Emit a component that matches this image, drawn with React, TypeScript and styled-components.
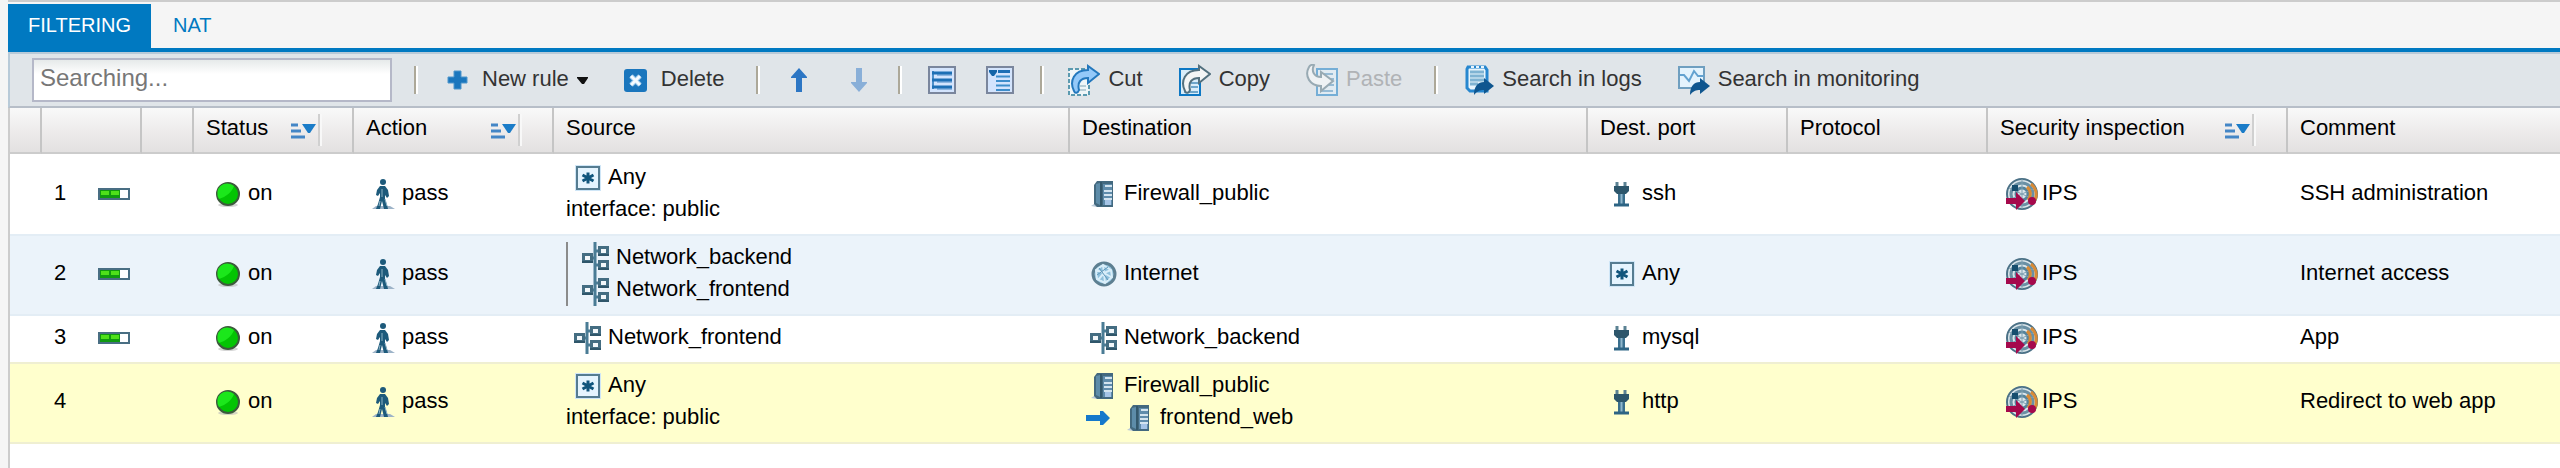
import React from 'react';
import styled, { createGlobalStyle } from 'styled-components';

const GlobalStyle = createGlobalStyle`
  * { box-sizing: border-box; }
  body {
    margin: 0;
    background: #f5f5f5;
    color: #000;
    font-family: "Liberation Sans", Arial, sans-serif;
    font-size: 22px;
  }
  button, input { font: inherit; color: inherit; }
  svg { display: block; flex: none; }
`;

const Panel = styled.main`
  margin-left: 8px;
  min-height: 100vh;
  display: flex;
  flex-direction: column;
  border-top: 2px solid #ccc;
`;

const TabBar = styled.div`
  display: flex;
  gap: 2px;
  padding-top: 2px;
  border-bottom: 4px solid #0079c1;
`;

const Tab = styled.button<{ $active?: boolean }>`
  border: 0;
  padding: 0 20px 2px;
  font-size: 20px;
  line-height: 42px;
  background: ${(p) => (p.$active ? '#0079c1' : 'transparent')};
  color: ${(p) => (p.$active ? '#fff' : '#0079c1')};
`;

const Toolbar = styled.div`
  display: flex;
  align-items: center;
  padding: 4px 22px;
  border: solid #b8cad8;
  border-width: 2px 0 2px 2px;
  border-bottom-color: #b7bec8;
  background: #e0e5e9;
  color: #333;
`;

const SearchBox = styled.input`
  width: 360px;
  height: 44px;
  padding: 0 6px 4px;
  border: 2px solid #b5b8c8;
  border-radius: 0;
  outline: 0;
  background: linear-gradient(#e6eaea, #fff 14px);
  font-size: 24px;
  &::placeholder { color: #777; opacity: 1; }
`;

const Separator = styled.span`
  width: 4px;
  height: 28px;
  margin: 0 24px;
  border-left: 2px solid #aca899;
  border-right: 2px solid #fff;
`;

const FirstSeparator = styled(Separator)`
  margin-left: 22px;
`;

const Group = styled.div<{ $gap: number }>`
  display: flex;
  gap: ${(p) => p.$gap}px;
`;

const ToolButton = styled.button<{ $menu?: boolean }>`
  display: flex;
  align-items: center;
  gap: 8px;
  border: 0;
  padding: 0 ${(p) => (p.$menu ? 4 : 8)}px 0 0;
  background: transparent;
  white-space: nowrap;
  &:disabled { color: #b0b3b6; }
  &:disabled svg { opacity: 0.5; }
`;

const IconButton = styled(ToolButton)`
  padding: 0;
`;

const Caption = styled.span`
  line-height: 30px;
  padding-bottom: 2px;
`;

const Grid = styled.div`
  flex: 1;
  border-left: 2px solid #ccc;
  background: #fff;
`;

const RuleTable = styled.table`
  width: 100%;
  table-layout: fixed;
  border-collapse: separate;
  border-spacing: 0;
`;

const Column = styled.col<{ $width?: number }>`
  ${(p) => (p.$width ? `width: ${p.$width}px;` : '')}
`;

const HeadCell = styled.th`
  height: 46px;
  padding: 0 30px 0 12px;
  border-right: 2px solid #c5c5c5;
  border-bottom: 2px solid #ccc;
  background: linear-gradient(#f9f9f9, #eeecec 50%, #e3e1e1);
  font-weight: 400;
  text-align: left;
  white-space: nowrap;
  &:last-child { border-right: 0; }
`;

const HeadInner = styled.div`
  display: flex;
  justify-content: space-between;
  align-items: center;
`;

const HeadText = styled.span`
  line-height: 28px;
  padding-bottom: 4px;
`;

const SortMark = styled.span`
  display: flex;
  align-items: center;
  gap: 2px;
  height: 32px;
  border-right: 2px solid #f8f8f8;
`;

const SortLine = styled.span`
  width: 2px;
  height: 32px;
  background: #d0d0d0;
`;

type Tone = 'plain' | 'blue' | 'yellow';
const toneFill = { plain: '#fff', blue: '#ebf3fa', yellow: '#ffffcd' };
const toneEdge = { none: '#fff', blue: '#e3edf5', yellow: '#efefd2' };

const Row = styled.tr<{ $tone: Tone; $edge: keyof typeof toneEdge }>`
  & > td {
    padding: 6px 0 8px 12px;
    border-top: 2px solid ${(p) => toneEdge[p.$edge]};
    background: ${(p) => toneFill[p.$tone]};
    vertical-align: middle;
    white-space: nowrap;
  }
  &:last-child > td { border-bottom: 2px solid ${toneEdge.yellow}; }
`;

const Line = styled.div<{ $indent?: boolean }>`
  display: flex;
  align-items: flex-start;
  gap: 4px;
  height: 32px;
  line-height: 30px;
  padding-left: ${(p) => (p.$indent ? 6 : 0)}px;
`;

const RuleNumber = styled.span`
  width: 40px;
`;

const ObjectList = styled.div`
  border-left: 2px solid #8b8b8b;
  padding-left: 6px;
`;

const Redirect = styled.div`
  display: flex;
  gap: 4px;
`;

const Icon = ({ children }: { children: React.ReactNode }) => (
  <svg width="32" height="32" viewBox="0 0 32 32" aria-hidden="true">{children}</svg>
);

const PlusIcon = () => (
  <Icon><path d="M12 7h7v6h6v6h-6v6h-7v-6H6v-6h6z" fill="#1a76bd" stroke="#4f96cc" /></Icon>
);

const CaretIcon = () => (
  <svg width="12" height="32" viewBox="0 0 12 32" aria-hidden="true">
    <path d="M0 13h11v1l-4 6H5l-5-6z" fill="#111" />
  </svg>
);

const DeleteIcon = () => (
  <Icon>
    <rect x="3" y="5" width="23" height="23" rx="3" fill="#1a76bd" />
    <path d="M10 12l9 9M19 12l-9 9" stroke="#8fc0e6" strokeWidth="5" />
    <path d="M10 12l9 9M19 12l-9 9" stroke="#f4faff" strokeWidth="3" />
  </Icon>
);

const UpIcon = () => (
  <Icon><path d="M15 4l8 9v1h-5v14h-6V14H7v-1z" fill="#2c76c4" /></Icon>
);

const DownIcon = () => (
  <Icon><path d="M17 28l8-9v-1h-5V4h-6v14H9v1z" fill="#89afd8" /></Icon>
);

const ExpandIcon = () => (
  <Icon>
    <rect x="3" y="3" width="26" height="26" fill="#d3e4fd" stroke="#7a869d" strokeWidth="2" />
    <path d="M11 11h15M11 18h15M11 25h15" stroke="#8eb6e0" strokeWidth="2" />
    <path d="M7 7v18" stroke="#4d8fc9" strokeWidth="2" />
    <path d="M6 9h20M6 16h20M6 23h20" stroke="#1d6fb5" strokeWidth="3" />
  </Icon>
);

const CollapseIcon = () => (
  <Icon>
    <rect x="3" y="3" width="26" height="26" fill="#d3e4fd" stroke="#7a869d" strokeWidth="2" />
    <path d="M5 6h8v2l-3 4H8L5 8z" fill="#1465a8" />
    <path d="M14 7.500h12" stroke="#1d6fb5" strokeWidth="3" />
    <path d="M12 12.500h14M12 17h14M12 21.500h14M12 26h14" stroke="#3d8dcb" strokeWidth="2" />
  </Icon>
);

const bend = 'M6 27C1 17 6 6 20 6V2l11 8-11 9v-5c-7 0-11 4-9 12-1 3-4 4-5 1z';

const CutIcon = () => (
  <Icon>
    <path d="M1 5h15v4h5v22H1z" fill="#f0f6f8" stroke="#5b9ab0" strokeWidth="2" strokeDasharray="4 2" />
    <path d="M12 22h6M9 26h9" stroke="#b7cdd6" strokeWidth="2" />
    <path d={bend} fill="#94c9f9" stroke="#2478bd" strokeWidth="2" />
  </Icon>
);

const CopyIcon = () => (
  <Icon>
    <path d="M1 5h20v26H1z" fill="#d8edfa" stroke="#0d78c4" strokeWidth="2" />
    <path d="M12 19h7M12 23h7M5 28h14" stroke="#6da6cb" strokeWidth="2" />
    <path d={bend} fill="#f3f5f5" stroke="#52707e" strokeWidth="2" />
  </Icon>
);

const PasteIcon = () => (
  <Icon>
    <path d="M11 5h20v26H11z" fill="#e3f1fb" stroke="#0d78c4" strokeWidth="2" />
    <path d="M15 10h12M19 15h9M23 21h5M15 27h12" stroke="#4f93c2" strokeWidth="2" />
    <path d="M8 1C5 7 8 13 15 13V8l12 9-12 10v-5C4 22-2 12 3 3c1-2 4-3 5-2z" fill="#fff" stroke="#52707e" strokeWidth="2" />
  </Icon>
);

const shareArrow = 'M12 31c0-9 4-13 10-13v-4l10 8-10 8v-4c-4 0-7 1-10 5z';

const LogsIcon = () => (
  <Icon>
    <path d="M6 3h17l2 3v21H8l-3-3V5z" fill="#e8f5fd" stroke="#2787cf" strokeWidth="3" />
    <path d="M9 3h3M14 3h3M19 3h3" stroke="#e8f5fd" strokeWidth="2" />
    <path d="M8 8h14M8 12h14M8 16h14M8 20h8" stroke="#7fb3d2" strokeWidth="3" />
    <path d={shareArrow} fill="#0f568f" />
  </Icon>
);

const MonitoringIcon = () => (
  <Icon>
    <rect x="1" y="3" width="25" height="21" fill="#e4f3fd" stroke="#6f9fc0" strokeWidth="2" />
    <path d="M2 11h4l5 6 5-10 4 5h6" fill="none" stroke="#63a2d0" strokeWidth="2" />
    <path d={shareArrow} fill="#0f568f" />
  </Icon>
);

const SortIcon = () => (
  <svg width="25" height="20" viewBox="0 0 25 20" aria-hidden="true">
    <path d="M0 5h7M0 11h10M0 17h14" stroke="#4486c6" strokeWidth="3" />
    <path d="M11 4h14l-6 9h-2z" fill="#1b7cc8" />
  </svg>
);

const UsageMeter = () => (
  <Icon>
    <rect x="1" y="11" width="30" height="10" fill="#fff" stroke="#496e83" strokeWidth="2" />
    <path d="M2 12h20v8H2z" fill="#0f9a10" />
    <path d="M3 13h8v4H3zM13 13h8v4h-8z" fill="#4fe01a" />
  </Icon>
);

const OnIcon = () => (
  <Icon>
    <ellipse cx="16" cy="27" rx="10" ry="2" fill="#bbb" opacity="0.6" />
    <circle cx="16" cy="16" r="11" fill="#03c403" stroke="#3c5a3c" strokeWidth="2" />
    <path d="M7 21A10 10 0 0 1 22 8C20 14 14 19 7 21z" fill="#1be71b" />
  </Icon>
);

const PassIcon = () => (
  <Icon>
    <path d="M6 31l4-3h14l5 3z" fill="#9db3c8" />
    <circle cx="17" cy="4" r="3" fill="#1d5a7b" />
    <path d="M14 8h5l3 4 1 6-2 2-2-3v4l2 6 1 4h-4l-2-8-2 8h-4l2-5 2-7v-4l-2 3-2-1 1-5z" fill="#1d5a7b" />
    <path d="M16 11v8M19 21l2 7M14 23l-1 5" stroke="#8db3c6" />
  </Icon>
);

const AnyIcon = () => (
  <Icon>
    <rect x="3" y="3" width="26" height="26" fill="#cfe6f7" />
    <rect x="5" y="5" width="22" height="22" fill="#e5f4fe" stroke="#557c91" strokeWidth="2" />
    <path d="M16 10.500v11M10.500 13l11 6M21.500 13l-11 6" stroke="#10557c" strokeWidth="3" />
  </Icon>
);

const NetworkIcon = () => (
  <Icon>
    <path d="M15 0v32M8 16h7M15 9h6M15 23h6" stroke="#4a7c95" strokeWidth="3" fill="none" />
    <g fill="#f2f7fa" stroke="#446d82" strokeWidth="3">
      <rect x="3.500" y="12.500" width="8" height="7" />
      <rect x="19.500" y="5.500" width="8" height="7" />
      <rect x="19.500" y="19.500" width="8" height="7" />
    </g>
    <path d="M2 20h11M18 13h11M18 27h11" stroke="#2f566a" strokeWidth="2" />
  </Icon>
);

const HostIcon = () => (
  <Icon>
    <path d="M3 28l6-4v5z" fill="#b9c9d8" />
    <path d="M9 3h16v26H9l-3-3V7z" fill="#43697f" />
    <path d="M8 6l4-1v22l-4-2z" fill="#5d8ca9" />
    <rect x="15" y="6" width="9" height="21" fill="#5f8cab" />
    <path d="M17 8h7M16 13h8M16 17h8M16 21h8" stroke="#d3e4ef" strokeWidth="2" />
    <rect x="17" y="22" width="6" height="5" fill="#a5c4e6" />
    <path d="M13 4v24" stroke="#33586c" strokeWidth="2" />
  </Icon>
);

const GlobeIcon = () => (
  <Icon>
    <circle cx="16" cy="16" r="11" fill="#8fc0dc" stroke="#5d7f91" strokeWidth="3" />
    <path d="M8 12l7-5 8 5 1 7-7 6-8-4zM8 12l8 3 7-3M16 15l-6 7M16 15l7 4M15 7l1 8 1 10" fill="none" stroke="#d9eef9" strokeWidth="2" />
    <path d="M11 10l9 12M20 9L9 17" stroke="#5f97b8" />
  </Icon>
);

const PortIcon = () => (
  <Icon>
    <path d="M11 4v6M19 4v6" stroke="#5b8293" strokeWidth="3" />
    <path d="M8 8h15v5l-3 3H11l-3-3z" fill="#2d566b" />
    <path d="M12 16h7v11h-7z" fill="#3a6f8d" />
    <path d="M15.500 16v11" stroke="#8fb7cc" strokeWidth="2" />
    <path d="M8 27h15" stroke="#2d6484" strokeWidth="3" />
  </Icon>
);

const IpsIcon = () => (
  <Icon>
    <circle cx="16" cy="16" r="15" fill="#dbe6eb" stroke="#4b7186" strokeWidth="2" />
    <circle cx="16" cy="16" r="11" fill="none" stroke="#6a90a4" strokeWidth="3" />
    <circle cx="16" cy="16" r="6" fill="none" stroke="#55839b" strokeWidth="3" />
    <path d="M16 1v30M3 10l26 12M29 10L3 22" stroke="#7d9fb1" />
    <path d="M25 6a13 13 0 0 1 2 19M21 9a9 9 0 0 1 1 13" fill="none" stroke="#d98a35" strokeWidth="3" />
    <rect x="6" y="7" width="6" height="6" fill="#164e6e" />
    <path d="M0 20h10v-6l9 9-9 9v-6H0z" fill="#a5094c" />
    <circle cx="26" cy="23" r="4" fill="#a5094c" />
  </Icon>
);

const RedirectArrow = () => (
  <Icon><path d="M4 13h14V9h3l7 7-7 7h-3v-4H4z" fill="#1579cb" /></Icon>
);

type NetObject = { icon: () => React.JSX.Element; name: string };
type Rule = {
  tone: Tone;
  edge: keyof typeof toneEdge;
  metered: boolean;
  source: NetObject[];
  via?: string;
  destination: NetObject;
  redirect?: NetObject;
  port: NetObject;
  comment: string;
};

const rules: Rule[] = [
  {
    tone: 'plain', edge: 'none', metered: true,
    source: [{ icon: AnyIcon, name: 'Any' }], via: 'interface: public',
    destination: { icon: HostIcon, name: 'Firewall_public' },
    port: { icon: PortIcon, name: 'ssh' }, comment: 'SSH administration',
  },
  {
    tone: 'blue', edge: 'blue', metered: true,
    source: [{ icon: NetworkIcon, name: 'Network_backend' }, { icon: NetworkIcon, name: 'Network_frontend' }],
    destination: { icon: GlobeIcon, name: 'Internet' },
    port: { icon: AnyIcon, name: 'Any' }, comment: 'Internet access',
  },
  {
    tone: 'plain', edge: 'blue', metered: true,
    source: [{ icon: NetworkIcon, name: 'Network_frontend' }],
    destination: { icon: NetworkIcon, name: 'Network_backend' },
    port: { icon: PortIcon, name: 'mysql' }, comment: 'App',
  },
  {
    tone: 'yellow', edge: 'yellow', metered: false,
    source: [{ icon: AnyIcon, name: 'Any' }], via: 'interface: public',
    destination: { icon: HostIcon, name: 'Firewall_public' },
    redirect: { icon: HostIcon, name: 'frontend_web' },
    port: { icon: PortIcon, name: 'http' }, comment: 'Redirect to web app',
  },
];

const columns: { title: string; width?: number; sortable?: boolean }[] = [
  { title: '', width: 32 },
  { title: '', width: 100 },
  { title: '', width: 52 },
  { title: 'Status', width: 160, sortable: true },
  { title: 'Action', width: 200, sortable: true },
  { title: 'Source', width: 516 },
  { title: 'Destination', width: 518 },
  { title: 'Dest. port', width: 200 },
  { title: 'Protocol', width: 200 },
  { title: 'Security inspection', width: 300, sortable: true },
  { title: 'Comment' },
];

const ObjectLine = ({ item }: { item: NetObject }) => {
  const Glyph = item.icon;
  return <Line $indent><Glyph /><span>{item.name}</span></Line>;
};

const RuleRow = ({ rule, index }: { rule: Rule; index: number }) => (
  <Row $tone={rule.tone} $edge={rule.edge}>
    <td />
    <td><Line><RuleNumber>{index}</RuleNumber>{rule.metered && <UsageMeter />}</Line></td>
    <td />
    <td><Line $indent><OnIcon /><span>on</span></Line></td>
    <td><Line><PassIcon /><span>pass</span></Line></td>
    <td>
      {rule.source.length > 1
        ? <ObjectList>{rule.source.map((o) => <ObjectLine key={o.name} item={o} />)}</ObjectList>
        : <ObjectLine item={rule.source[0]} />}
      {rule.via && <Line>{rule.via}</Line>}
    </td>
    <td>
      <ObjectLine item={rule.destination} />
      {rule.redirect && <Redirect><RedirectArrow /><ObjectLine item={rule.redirect} /></Redirect>}
    </td>
    <td><ObjectLine item={rule.port} /></td>
    <td />
    <td><Line $indent><IpsIcon /><span>IPS</span></Line></td>
    <td><Line>{rule.comment}</Line></td>
  </Row>
);

export default function App() {
  return (
    <>
      <GlobalStyle />
      <Panel>
        <TabBar role="tablist">
          <Tab role="tab" aria-selected $active>FILTERING</Tab>
          <Tab role="tab" aria-selected={false}>NAT</Tab>
        </TabBar>
        <Toolbar>
          <SearchBox type="text" placeholder="Searching..." aria-label="Search rules" />
          <FirstSeparator />
          <Group $gap={28}>
            <ToolButton $menu><PlusIcon /><Caption>New rule</Caption><CaretIcon /></ToolButton>
            <ToolButton><DeleteIcon /><Caption>Delete</Caption></ToolButton>
          </Group>
          <Separator />
          <Group $gap={26}>
            <IconButton aria-label="Move up"><UpIcon /></IconButton>
            <IconButton aria-label="Move down"><DownIcon /></IconButton>
          </Group>
          <Separator />
          <Group $gap={26}>
            <IconButton aria-label="Expand all"><ExpandIcon /></IconButton>
            <IconButton aria-label="Collapse all"><CollapseIcon /></IconButton>
          </Group>
          <Separator />
          <Group $gap={28}>
            <ToolButton><CutIcon /><Caption>Cut</Caption></ToolButton>
            <ToolButton><CopyIcon /><Caption>Copy</Caption></ToolButton>
            <ToolButton disabled><PasteIcon /><Caption>Paste</Caption></ToolButton>
          </Group>
          <Separator />
          <Group $gap={28}>
            <ToolButton><LogsIcon /><Caption>Search in logs</Caption></ToolButton>
            <ToolButton><MonitoringIcon /><Caption>Search in monitoring</Caption></ToolButton>
          </Group>
        </Toolbar>
        <Grid>
          <RuleTable>
            <colgroup>{columns.map((c, i) => <Column key={i} $width={c.width} />)}</colgroup>
            <thead>
              <tr>
                {columns.map((c, i) => (
                  <HeadCell key={i} scope="col">
                    <HeadInner>
                      <HeadText>{c.title}</HeadText>
                      {c.sortable && <SortMark><SortIcon /><SortLine /></SortMark>}
                    </HeadInner>
                  </HeadCell>
                ))}
              </tr>
            </thead>
            <tbody>
              {rules.map((r, i) => <RuleRow key={i} rule={r} index={i + 1} />)}
            </tbody>
          </RuleTable>
        </Grid>
      </Panel>
    </>
  );
}
